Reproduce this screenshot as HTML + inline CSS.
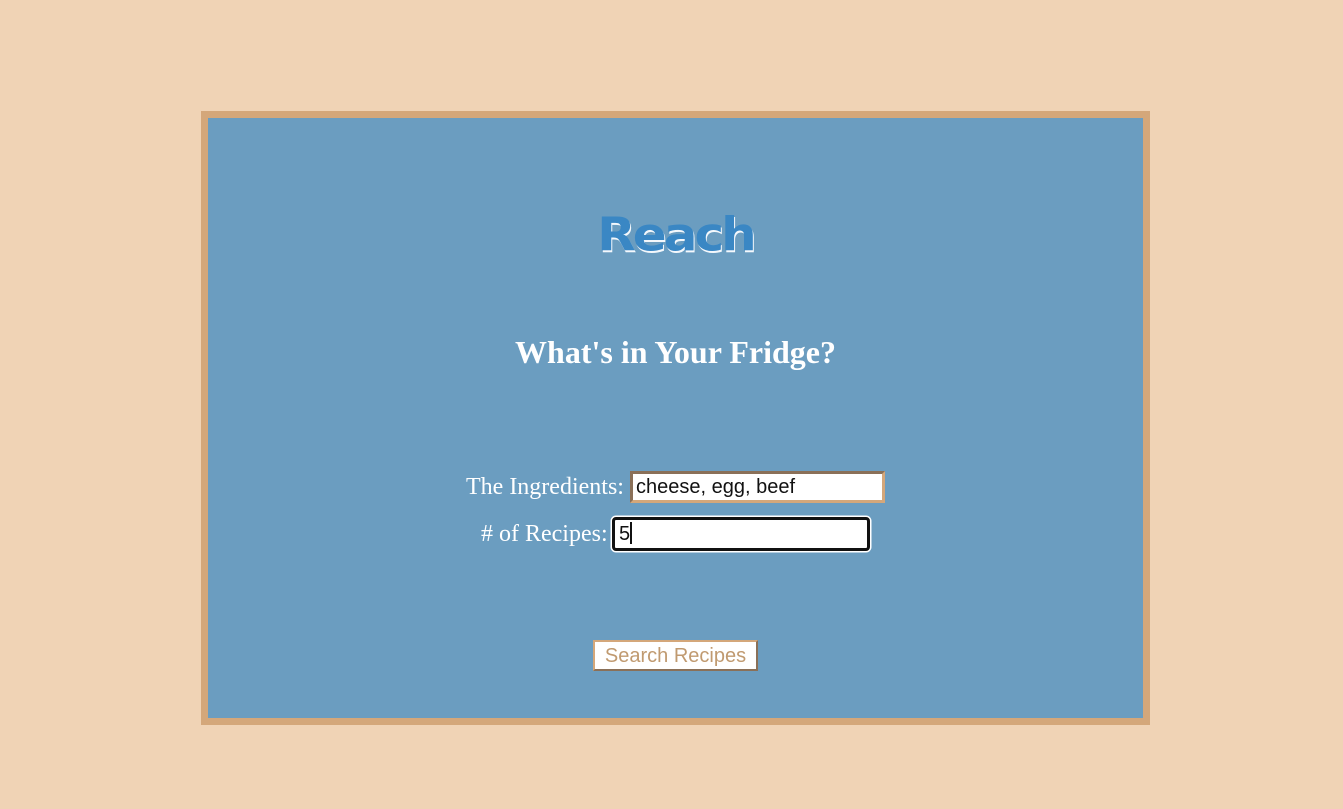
<!DOCTYPE html>
<html><head><style>
body{margin:0;width:1343px;height:809px;background:#f0d3b5;position:relative;overflow:hidden;font-family:"Liberation Serif",serif}
.box{position:absolute;left:201px;top:111px;width:935px;height:600px;border:7px solid #d4a77a;background:#6b9dc0}
.logo{position:absolute;left:0;width:949px;top:206px;text-align:center;font-family:"DejaVu Sans",sans-serif;font-weight:900;font-size:50px;letter-spacing:-3px;color:#3a87c4;text-shadow:1px 2px 0 #f4f8fc;transform:scaleY(0.92)}
h1{position:absolute;left:201px;width:949px;top:334px;margin:0;text-align:center;color:#fff;font-size:32px;font-weight:bold}
.lbl{position:absolute;color:#fff;font-size:24px}
.in{position:absolute;background:#fff;box-sizing:border-box;font-family:"Liberation Sans",sans-serif;font-size:20px;color:#111;padding-left:3px}
.btn{position:absolute;left:593px;top:640px;width:165px;height:31px;box-sizing:border-box;background:#fff;border:2px solid;border-color:#d4a77a #8a7058 #8a7058 #d4a77a;font-family:"Liberation Sans",sans-serif;font-size:20px;color:#c09a70;text-align:center;line-height:29px}
</style></head><body>
<div class="box"></div>
<div class="logo" style="left:201px">Reach</div>
<h1>What's in Your Fridge?</h1>
<div class="lbl" style="left:466px;top:474px">The Ingredients:</div>
<div class="in" style="left:630px;top:471px;width:255px;height:32px;border:3px solid;border-color:#8a7058 #d4a77a #d4a77a #8a7058;line-height:27px">cheese, egg, beef</div>
<div class="lbl" style="left:481px;top:521px"># of Recipes:</div>
<div class="in" style="left:612px;top:517px;width:258px;height:34px;border:3px solid #111;border-radius:4px;box-shadow:0 0 0 1.5px #fff;line-height:28px;padding-left:4px">5<span style="display:inline-block;width:2px;height:22px;background:#111;vertical-align:-4px"></span></div>
<div class="btn">Search Recipes</div>
</body></html>
